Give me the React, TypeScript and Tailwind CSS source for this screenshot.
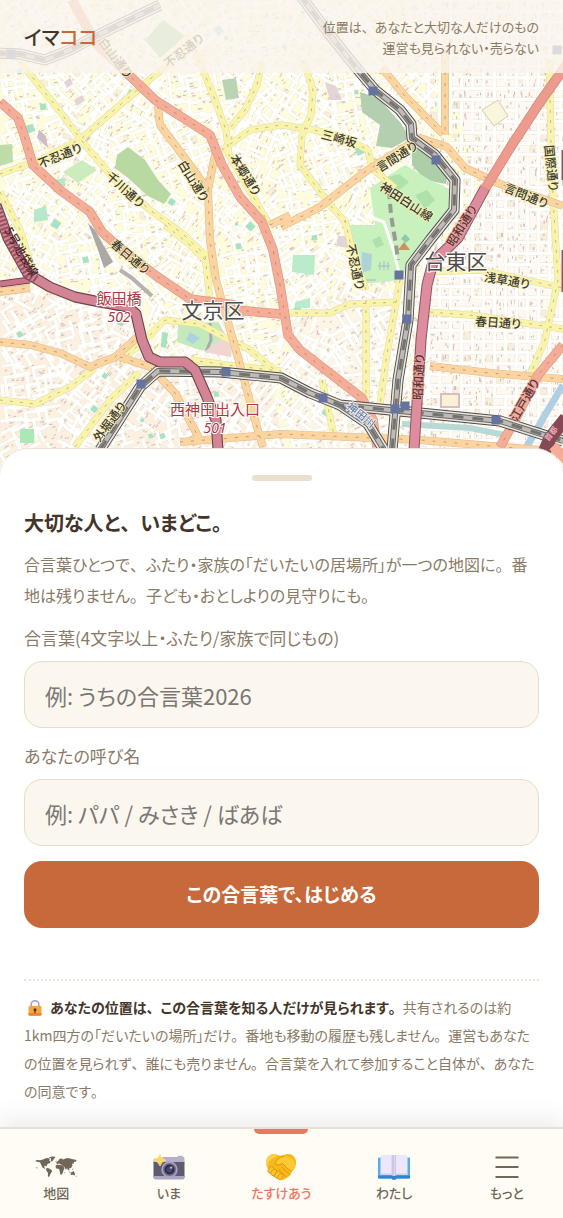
import type { ReactNode } from "react";

/* ---------- map ---------- */

function makeRandom(seed: number) {
  let s = seed;
  return () => {
    s = (s * 1664525 + 1013904223) % 4294967296;
    return s / 4294967296;
  };
}

type Texture = { streets: string; dots: string; pink: string; blocks: string; teal: string };

/** Minor streets and building marks, laid on loosely rotated local grids. */
function buildTexture(): Texture {
  const rnd = makeRandom(42);
  const out: Texture = { streets: "", dots: "", pink: "", blocks: "", teal: "" };
  const p = (n: number) => n.toFixed(1);
  for (let y = 0; y < 480; y += 11) {
    for (let x = 0; x < 570; x += 11) {
      const right = x > 425;
      const angle = right
        ? 0.06
        : -0.65 + 0.5 * Math.sin(Math.floor(x / 55) * 2.1 + Math.floor(y / 60) * 1.3);
      const c = Math.cos(angle);
      const s = Math.sin(angle);
      const jx = x + (right ? 0 : rnd() * 6);
      const jy = y + (right ? 0 : rnd() * 6);
      const l = 9 + rnd() * 10;
      if (rnd() < 0.8) out.streets += `M${p(jx)} ${p(jy)}l${p(c * l)} ${p(s * l)}`;
      if (rnd() < 0.75) out.streets += `M${p(jx)} ${p(jy)}l${p(-s * l)} ${p(c * l)}`;
      for (let k = 0; k < 3; k++) {
        const a = jx + rnd() * 10;
        const b = jy + rnd() * 10;
        const m = 1.5 + rnd() * 3;
        const seg = `M${p(a)} ${p(b)}l${p(right ? 0 : c * m)} ${p(right ? m : s * m)}`;
        if (rnd() < 0.6) out.dots += seg;
        else out.pink += seg;
      }
      const w = 3 + rnd() * 5;
      const block = `M${p(jx + 2)} ${p(jy + 2)}l${p(c * w)} ${p(s * w)}l${p(-s * w)} ${p(c * w)}l${p(-c * w)} ${p(-s * w)}z`;
      const pick = rnd();
      if (!right && pick < 0.03) out.teal += block;
      else if (pick > 0.9) out.blocks += block;
    }
  }
  return out;
}

const texture = buildTexture();

const yellowRoads = [
  "M20 62 55 105 85 145 115 180 150 210 183 234 205 255 210 300",
  "M0 174 40 160 82 138 120 105 155 75 190 48",
  "M195 50 215 100 226 130 229 155 262 212 270 225",
  "M262 62 257 85 245 110 230 128",
  "M222 150 250 130 281 125 310 129 345 138 368 150 372 168 395 188",
  "M303 60 313 90 311 115 302 135 300 165 330 205 345 222",
  "M345 220 352 250 366 290",
  "M0 192 20 230 34 275",
  "M0 400 35 404 70 387 95 368",
  "M120 362 150 335 165 320 200 324 230 340 250 350 300 390 335 400",
  "M190 360 235 366 281 371",
  "M285 313 330 313 350 304 400 302",
  "M366 300 366 400",
  "M400 280 386 360 379 412",
  "M430 272 480 270 563 288",
  "M430 312 480 316 563 329",
  "M549 60 552 180 558 280 545 340 528 380",
  "M75 447 110 400 140 372",
  "M322 380 335 440",
  "M165 225 190 245 207 262",
];

const orangeRoads = [
  "M158 106 160 125 190 165 208 190 210 240 216 280 226 315 240 365 255 420 263 447",
  "M208 190 216 150",
  "M382 68 405 96 443 134",
  "M445 50 445 135",
  "M281 227 320 207 365 172 400 150 420 138 447 147 465 168 500 184 563 206",
  "M0 342 30 345 60 353 90 367 115 357 140 335",
  "M120 357 150 367 175 393 200 440",
  "M430 366 490 373 563 379",
  "M180 442 281 434 420 440 563 452",
  "M0 292 30 288",
  "M270 225 290 215",
];

const salmonRoads = [
  "M0 102 18 118 24 135 33 165 60 190 90 212 102 232 120 248 155 275 190 299 235 305",
  "M235 310 281 314",
  "M72 0 95 42 130 76 155 100 210 135 222 165 240 197 262 222 273 250 280 285 288 335 300 350 362 398 373 420 377 447",
  "M563 345 538 375 515 420 500 447",
];

const rails = [
  "M300 -5 330 35 358 70 375 90 400 110 411 124 412 138 435 155 455 180 454 210 430 240 411 265 408 320 398 380 392 450",
  "M100 450 140 387 158 371 220 372 281 378 310 393 340 405 400 411 500 421 563 441",
  "M340 405 368 424 384 450",
  "M-5 53 20 54 45 60 70 50 100 34 160 5",
];

const stations = [
  [373, 91], [436, 160], [399, 275], [407, 319], [323, 398], [395, 409], [405, 406], [496, 420], [141, 384], [226, 372], [11, 54], [557, 50],
];

type Label = { x: number; y: number; r: number; t: string; dark?: boolean };

const roadLabels: Label[] = [
  { x: 60, y: 156, r: -22, t: "不忍通り" },
  { x: 125, y: 190, r: 42, t: "千川通り" },
  { x: 193, y: 181, r: 58, t: "白山通り" },
  { x: 245, y: 175, r: 58, t: "本郷通り" },
  { x: 339, y: 139, r: 15, t: "三崎坂" },
  { x: 397, y: 157, r: -32, t: "言間通り" },
  { x: 406, y: 202, r: 33, t: "神田白山線" },
  { x: 526, y: 196, r: 22, t: "言問通り" },
  { x: 551, y: 168, r: 84, t: "国際通り" },
  { x: 130, y: 257, r: 40, t: "春日通り" },
  { x: 355, y: 267, r: 78, t: "不忍通り" },
  { x: 507, y: 281, r: 10, t: "浅草通り" },
  { x: 498, y: 323, r: 4, t: "春日通り" },
  { x: 110, y: 422, r: -53, t: "外堀通り" },
  { x: 462, y: 226, r: -58, t: "昭和通り", dark: true },
  { x: 419, y: 377, r: -87, t: "昭和通り", dark: true },
  { x: 525, y: 400, r: -60, t: "江戸通り", dark: true },
  { x: 115, y: 58, r: 52, t: "白山通り" },
  { x: 184, y: 51, r: -38, t: "不忍通り" },
];

function CityMap() {
  return (
    <svg
      viewBox="0 0 563 480"
      preserveAspectRatio="xMidYMin slice"
      className="block h-[480px] w-full"
      style={{ fontFamily: '"Noto Sans CJK JP", sans-serif' }}
      role="img"
      aria-label="地図"
    >
      <rect width="563" height="480" fill="#fffbdc" />
      <path d="M0 285 135 310 160 365 270 375 290 480H0z" fill="#fcf0df" />
      <path d="M425 0H563V480H395L430 262 483 190z" fill="#fff9f1" />
      <path d="M285 300 400 290 390 450H300z" fill="#fdf6e6" />
      <path d={texture.blocks} fill="#f8efd8" stroke="#e8dfcf" strokeWidth=".6" />
      <path d={texture.dots} stroke="#c4bab0" strokeWidth="1" fill="none" />
      <path d={texture.pink} stroke="#dfbcc8" strokeWidth="1.4" fill="none" />
      <path d={texture.streets} stroke="#ebe2d2" strokeWidth="3.800" fill="none" />
      <path d={texture.streets} stroke="#fff" strokeWidth="3.200" fill="none" strokeLinecap="round" />
      <path d={texture.teal} fill="#9fe0bf" />

      <path d="M117 155 128 147 145 160 158 180 171 194 164 204 148 196 128 178 115 168z" fill="#b4d69c" />
      <path d="M0 145 12 144 13 162 0 166z" fill="#b9d9a3" />
      <path d="M63 172 82 160 97 170 78 183z" fill="#c9ebb9" />
      <path d="M145 40 163 20 185 36 160 58z" fill="#9fd09b" />
      <path d="M222 80 236 78 239 98 226 100z" fill="#b5d0b0" />
      <path d="M360 92 378 98 400 122 410 138 392 148 376 146 380 125 362 112z" fill="#aecbaa" />
      <path d="M412 146 428 155 448 172 446 184 425 180 412 165z" fill="#a5cba1" />
      <path d="M370 188 405 165 430 180 452 190 452 212 428 238 408 262 402 280 362 284 352 250 350 225 375 225z" fill="#c4f0ba" />
      <path d="M385 178l14-4 10 8-12 10zM415 195l12-5 8 10-10 9zM372 240l8-4 4 9-8 3z" fill="#a9dfa5" />
      <path d="M362 252 372 254 371 270 361 273z" fill="#a5d0d4" />
      <path d="M378 266h12M380 262v8M384 261v9M388 262v8M366 280h10" stroke="#9ab7c6" strokeWidth="1" />
      <path d="M293 255 315 255 314 275 292 272zM295 302 310 298 310 308 296 308z" fill="#b5ebc8" />
      <path d="M178 324 218 322 229 340 224 352 200 350 177 342z" fill="#bfe9b8" />
      <path d="M190 332 200 338 193 344 186 340z" fill="#a6cfe0" />
      <path d="M210 323 211 340 206 352" stroke="#a3a3a8" strokeWidth="3" fill="none" />
      <path d="M204 352 226 335 233 340 231 357z" fill="#efd3d0" />
      <path d="M162 332 168 333 166 348 161 347z" fill="#9fe0bf" />
      <path d="M20 429 34 429 34 443 20 443z" fill="#a4e6b4" />
      <path d="M34 210 46 206 48 220 34 222zM52 180 66 178 64 186 52 186z" fill="#b0e6c8" />
      <path d="M88 223 95 230 105 248 113 262 104 268 98 250z" fill="#a5a19d" />
      <path d="M120 270 132 278 152 296" stroke="#b0aca6" strokeWidth="4" fill="none" />
      <path d="M39 130 46 136 48 148 37 138z" fill="#c9b9c0" />
      <path d="M325 82 336 86 342 100 330 100zM338 236 348 236 348 248 336 246zM64 82l6-4 3 6-6 4zM74 100l8-5 3 5-8 6z" fill="#d9c7d2" opacity=".8" />
      <path d="M402 424 470 428 510 436" stroke="#b3d6d3" strokeWidth="6" fill="none" />
      <path d="M441 394h18v13h-18z" fill="#fbf0d6" stroke="#dcb6bb" strokeWidth="2" />
      <path d="M482 110 498 100 508 116 494 126z" fill="#f9f6da" stroke="#cdc9b4" />
      <path d="M563 385 545 415 525 450" stroke="#a9cbe4" strokeWidth="7" fill="none" />
      <path d="M365 215 384 222 394 252 399 273" stroke="#fff" strokeWidth="3" fill="none" />
      <path d="M389 190 391 215 396 245 398 260" stroke="#8d948b" strokeWidth="4" strokeDasharray="9 5" fill="none" />
      <path d="m398 250 6-8 6 8z" fill="#c58a55" />
      <path d="m401 239 4-5 5 5-4 4z" fill="#83c6a2" />

      <g fill="none" strokeLinejoin="round">
        {yellowRoads.map((d) => (
          <path key={d} d={d} stroke="#dcd8a4" strokeWidth="7" />
        ))}
        {yellowRoads.map((d) => (
          <path key={d} d={d} stroke="#f9f3a4" strokeWidth="6.200" />
        ))}
        {yellowRoads.map((d) => (
          <path key={d} d={d} stroke="#bdb583" strokeWidth="1" strokeDasharray="3 7" />
        ))}
        {orangeRoads.map((d) => (
          <path key={d} d={d} stroke="#dfb988" strokeWidth="8" />
        ))}
        {orangeRoads.map((d) => (
          <path key={d} d={d} stroke="#fbd19a" strokeWidth="6.800" />
        ))}
        {orangeRoads.map((d) => (
          <path key={d} d={d} stroke="#c0966a" strokeWidth="1" strokeDasharray="3 8" />
        ))}
        {salmonRoads.map((d) => (
          <path key={d} d={d} stroke="#dd8f7d" strokeWidth="9.500" />
        ))}
        {salmonRoads.map((d) => (
          <path key={d} d={d} stroke="#f4a790" strokeWidth="8.200" />
        ))}
        {salmonRoads.map((d) => (
          <path key={d} d={d} stroke="#c47d6c" strokeWidth="1" strokeDasharray="3 8" />
        ))}
        <path d="M570 60 540 102 510 148 483 192" stroke="#d27a70" strokeWidth="10" />
        <path d="M570 60 540 102 510 148 483 192" stroke="#ec9387" strokeWidth="8.600" />

        {rails.map((d) => (
          <path key={d} d={d} stroke="#3d3b39" strokeWidth="11" />
        ))}
        {rails.map((d) => (
          <path key={d} d={d} stroke="#e9e6e2" strokeWidth="9.200" />
        ))}
        {rails.map((d) => (
          <path key={d} d={d} stroke="#5e5b58" strokeWidth="6" />
        ))}
        {rails.map((d) => (
          <path key={d} d={d} stroke="#b9b5b0" strokeWidth="4" />
        ))}
        {rails.map((d) => (
          <path key={d} d={d} stroke="#6a6764" strokeWidth="3" strokeDasharray="11 9" />
        ))}

        <path d="M485 188 458 238 433 262 427 285 421 340 414 450" stroke="#7d4a56" strokeWidth="11" />
        <path d="M485 188 458 238 433 262 427 285 421 340 414 450" stroke="#db8497" strokeWidth="9" />
        <path d="M0 284 15 282 30 280" stroke="#6f3442" strokeWidth="7" />
        <path d="M0 284 15 282 30 280" stroke="#c76a7f" strokeWidth="5" />
        <path d="M-4 205 8 238 28 274 50 287 75 297 100 302 128 307 136 314 142 340 149 357 160 362 185 362 195 370 206 395 216 420 218 450" stroke="#5f343f" strokeWidth="11" />
        <path d="M-4 205 8 238 28 274 50 287 75 297 100 302 128 307 136 314 142 340 149 357 160 362 185 362 195 370 206 395 216 420 218 450" stroke="#d07b8f" strokeWidth="8.800" />
        <path d="M-4 205 8 238 28 274 36 280" stroke="#8d4554" strokeWidth="9" strokeDasharray="2 2" />
        <path d="M566 418 550 438 537 470" stroke="#7d3a49" strokeWidth="13" />
        <path d="M563 150V180M563 250V292" stroke="#8d4554" strokeWidth="3" />
        <path d="M553 446 572 466" stroke="#f4a790" strokeWidth="10" />
      </g>

      {stations.map(([x, y]) => (
        <rect key={`${x}-${y}`} x={x - 4.5} y={y - 4.5} width="9" height="9" fill="#5a669a" />
      ))}

      <g textAnchor="middle" fontSize="12" fontWeight="500">
        {roadLabels.map((l) => (
          <text
            key={`${l.x}-${l.y}`}
            transform={`translate(${l.x} ${l.y}) rotate(${l.r})`}
            dy="4"
            fill={l.dark ? "#4d2222" : "#2c2a1e"}
            stroke={l.dark ? "#e9a09a" : "#fbf3b4"}
            strokeWidth="1.500"
            paintOrder="stroke"
          >
            {l.t}
          </text>
        ))}
        <text transform="translate(21 252) rotate(60)" dy="4" fill="#3b121d" fontSize="12">
          5号池袋線
        </text>
        <text transform="translate(550 433) rotate(-52)" dy="4" fill="#f0b6bf" fontSize="8">
          首都
        </text>
        <text transform="translate(361 415) rotate(38)" dy="4" fill="#5f74a3" stroke="#fff" strokeWidth="1.500" paintOrder="stroke" fontSize="11">
          神田川
        </text>
      </g>
      <g textAnchor="middle" stroke="#fff" strokeWidth="2" paintOrder="stroke">
        <g fill="#a82836" fontSize="15">
          <text x="119" y="304">飯田橋</text>
          <text x="215" y="415">西神田出入口</text>
          <g fontFamily='"Noto Sans", sans-serif' fontStyle="italic" fontSize="14">
            <text x="119" y="322">502</text>
            <text x="215" y="433">501</text>
          </g>
        </g>
        <g fill="#3f3d3b" fontSize="21">
          <text x="213" y="318">文京区</text>
          <text x="456" y="269">台東区</text>
        </g>
      </g>
      <rect width="563" height="480" fill="#fffdf5" opacity=".08" />
    </svg>
  );
}

/* ---------- icons ---------- */

function WorldMapIcon() {
  return (
    <svg viewBox="0 0 42 22" className="h-[22px] w-[42px]" fill="#706758" aria-hidden="true">
      <path d="M0 5 2 4 5 4.300 8 3.500 10 2.500 12.500 2 15 2.800 14 4.500 15.500 5 15 7 12.500 8 11.500 10.500 10 9.500 9 11 10.500 12.300 9.500 12.700 7.500 11.500 6 8.500 5 6.300 3 6z" />
      <path d="M13.500 1.500 17 .5 20.500.800 19 3 17 5.500 15.800 5 16 2.500z" />
      <path d="M11 12.500 13 12 16 13.500 17.300 15 16 17 15 19 14 21 12.800 20.500 13 17 11.300 14.500z" />
      <path d="M20.500 10 22 8.500 25 9 28 9.500 29.500 12 28.500 14.500 27.500 17.500 26 19 25 17.500 24.500 14 23.500 12.800 21 12.500z" />
      <path d="M21.500 7.500 21.300 6 23 5.300 24 3.500 26 2.200 28 3.500 32 2 35 2.500 38 3.200 41.500 4 41 5.500 39 6 38.500 8 37 7.500 37.500 9.500 36 12 34 12.500 34.500 14.500 33 14 32 12 31 14 29.500 11 27.500 9.500 25.500 8.300 24 7.500 22.500 8z" />
      <path d="M36 16.500 38.500 15 40 17.500 39.500 19.500 37.500 18.800 35.500 19zM33.500 15.500 36 16 35 16.800zM29.500 16.500 30.300 15.800 30 18zM40.800 20.500 41.800 19.500 41.200 21.300zM1 11.500h1.500v.8H1zM37 13 38.500 12.500 38 14zM20.300 5.500 21.500 4.500 21.300 6z" />
    </svg>
  );
}

function CameraIcon() {
  return (
    <svg viewBox="0 0 32 26" className="h-[26px] w-8" aria-hidden="true">
      <path d="M9 4.500Q9 3 10.500 3H24l1.500-1.200h3.500L30.500 3Q31.500 3 31.500 5v4H.5V6Q.5 4.500 2 4.500z" fill="#b7b0cc" />
      <path d="M.5 8h31v15q0 2-2 2h-27q-2 0-2-2z" fill="#5f5a70" />
      <path d="M.5 22h31v1.500q0 2-2 2h-27q-2 0-2-2z" fill="#aca5c4" />
      <circle cx="16.500" cy="15.500" r="8.200" fill="#a9a3bf" />
      <circle cx="16.500" cy="15.500" r="6.600" fill="#75708a" />
      <circle cx="16.500" cy="15.500" r="5" fill="#2e2a41" />
      <circle cx="16.500" cy="15.500" r="3" fill="#46466e" />
      <circle cx="18.200" cy="13.600" r="1.200" fill="#b9bfe0" />
      <path d="M7 0q.8 4.800 5.800 6.200Q8.300 7.500 7 12 5.500 7.500.8 6.200 5.800 4.500 7 0z" fill="#fbd75b" stroke="#f7e59b" strokeWidth=".8" />
    </svg>
  );
}

function HandshakeIcon() {
  return (
    <svg viewBox="0 0 32 28" className="h-7 w-8" aria-hidden="true">
      <path d="M1 9Q1.500 3.500 6 1.500q3-1.200 6.500.5Q15.500 3 18.500 2q5.500-2.200 9 .3 4 3 3.500 8-.3 5-4 8.200-1.500 5-7 7.500-4 2-7 0Q5 23 3 16 1 12.500 1 9z" fill="#f8b918" />
      <path d="M1 9Q1.500 3.500 6 1.500q3-1.200 6.500.5Q11 4 7.500 5.500 3.500 7.500 2.500 14 1 12 1 9z" fill="#ffd145" />
      <path d="M12 7q3-4 8-3.800 5 .3 7.500 3 2 3.300 3 5.500-.5 4-3.500 6.800-6-3.500-9.500-8Q13.500 13 11 11.500 9.500 9.500 12 7z" fill="#ffca33" />
      <path d="M17.500 10.500Q14 13 11.300 11.600 9.400 9.500 12 7q3-3.600 7-3.700" fill="none" stroke="#d98a0a" strokeWidth=".9" />
      <path d="M17.500 10.500q4 5 9 8M17 14q3.500 4.500 7.500 7M14 16.500q3.500 4 6.500 7" fill="none" stroke="#dd930e" strokeWidth=".9" strokeLinecap="round" />
      <g fill="#ffc52b" stroke="#d98a0a" strokeWidth=".7">
        <rect x="3.500" y="13.500" width="4.600" height="7" rx="2.300" transform="rotate(35 6 17)" />
        <rect x="6.700" y="16" width="4.600" height="7" rx="2.300" transform="rotate(35 9 19)" />
        <rect x="10" y="18" width="4.600" height="7" rx="2.300" transform="rotate(35 12 22)" />
        <rect x="13.500" y="20.500" width="4.300" height="6" rx="2.100" transform="rotate(35 15 23)" />
      </g>
    </svg>
  );
}

function BookIcon() {
  return (
    <svg viewBox="0 0 32 26" className="h-[26px] w-8" aria-hidden="true">
      <path d="M0 4.500Q0 3.500 1 3.500h30q1 0 1 1v19q0 1-1 1H18.500q-.5 1.200-2.500 1.200t-2.500-1.200H1q-1 0-1-1z" fill="#58aeea" />
      <path d="M0 21.500h32v2q0 1-1 1H18.500q-.5 1.200-2.500 1.200t-2.500-1.200H1q-1 0-1-1z" fill="#2f85cf" />
      <path d="M2.500 3Q2.500 1 4.500 1H14q2 0 2 1.500V22q-1-1-3-1H2.500z" fill="#ece7fb" />
      <path d="M29.500 3q0-2-2-2H18q-2 0-2 1.500V22q1-1 3-1h10.500z" fill="#ece7fb" />
      <path d="M13.500 1H16v21q-.8-1-2.500-1zM18 1h-1.500v20.500l1.500-.5z" fill="#cfc6e6" />
      <path d="M2.500 19.500H14l2 1.500 2-1.500h11.500V21H19q-2 0-3 1-1-1-3-1H2.500z" fill="#d5cdee" />
    </svg>
  );
}

function MenuIcon() {
  return (
    <svg viewBox="0 0 24 24" className="size-6" stroke="#706758" strokeWidth="2" aria-hidden="true">
      <path d="M.5 2.500h23M.5 12h23M.5 22h23" />
    </svg>
  );
}

function LockIcon() {
  return (
    <svg viewBox="0 0 14 16" className="mr-2 ml-1 inline-block h-4 w-[14px] align-[-3px]" aria-hidden="true">
      <path d="M3.200 8V4.500a3.800 3.800 0 0 1 7.600 0V8" fill="none" stroke="#aaa3b8" strokeWidth="1.700" />
      <rect x=".5" y="6" width="13" height="9.700" rx="1.400" fill="#f7a63e" />
      <path d="M.5 13h13v1.300q0 1.400-1.400 1.400H1.900Q.5 15.700.5 14.300z" fill="#f08436" />
      <circle cx="7" cy="9.700" r="1.500" fill="#4d3430" />
      <path d="M6.400 10h1.200v3.300H6.400z" fill="#4d3430" />
    </svg>
  );
}

/* ---------- page ---------- */

/** Proportional kana, with the comma and full stop keeping their full width. */
function Ja({ children }: { children: string }) {
  return (
    <>
      {children.split(/([、。])/).map((part, i) =>
        part === "、" || part === "。" ? (
          <span key={i} className="[font-feature-settings:normal]">
            {part}
          </span>
        ) : (
          part
        ),
      )}
    </>
  );
}

function TextField({ id, label, placeholder }: { id: string; label: string; placeholder: string }) {
  return (
    <div>
      <label htmlFor={id} className="block text-[17px] leading-6 text-[#8a7a66]">
        {label}
      </label>
      <input
        id={id}
        type="text"
        placeholder={placeholder}
        className="mt-[11px] block h-[67px] w-full rounded-[18px] border border-[#e8dccb] bg-[#fbf6ee] px-5 text-[22px] text-[#43352a] outline-none placeholder:text-[#7a7774]"
      />
    </div>
  );
}

function NavItem({ label, active, children }: { label: string; active?: boolean; children: ReactNode }) {
  return (
    <a
      href="#"
      aria-current={active ? "page" : undefined}
      className={
        active
          ? "relative flex flex-1 flex-col items-center pt-6 text-[#ee7560]"
          : "relative flex flex-1 flex-col items-center pt-6 text-[#706758]"
      }
    >
      {active && <span className="absolute top-0 h-[5px] w-[54px] rounded-b-[5px] bg-[#ee7560]" />}
      <span className="flex h-7 items-center justify-center">{children}</span>
      <span className="text-[13px] leading-6 font-medium">{label}</span>
    </a>
  );
}

export default function App() {
  return (
    <div
      className="relative flex min-h-screen flex-col bg-white [font-feature-settings:'palt']"
      style={{ fontFamily: '"Noto Sans CJK JP", sans-serif' }}
    >
      <div className="relative h-[448px] shrink-0">
        <div className="absolute inset-x-0 top-0">
          <CityMap />
        </div>
        <header className="relative flex h-[73px] items-center justify-between bg-[#faf4ec]/80 px-6">
          <h1 className="text-[20px] leading-8 font-medium text-[#43352a]">
            イマ<span className="text-[#c7693b]">ココ</span>
          </h1>
          <p className="text-right text-[13px] leading-[21px] text-[#8a7a66]">
            <Ja>位置は、あなたと大切な人だけのもの</Ja>
            <br />
            運営も見られない・売らない
          </p>
        </header>
      </div>

      <main className="relative flex-1 rounded-t-[28px] border-t border-[#ebe3d8] bg-white px-6 pt-[26px]">
        <div className="mx-auto h-[6px] w-[60px] rounded-full bg-[#ebdfcf]" />
        <h2 className="mt-[26px] text-[20px] leading-8 font-bold text-[#43352a]">
          <Ja>大切な人と、いまどこ。</Ja>
        </h2>
        <p className="mt-[10px] text-[16px] leading-[31px] text-[#8a7a66]">
          <Ja>合言葉ひとつで、ふたり・家族の「だいたいの居場所」が一つの地図に。番</Ja>
          <br />
          <Ja>地は残りません。子ども・おとしよりの見守りにも。</Ja>
        </p>
        <form className="mt-[15px]" onSubmit={(e) => e.preventDefault()}>
          <div className="flex flex-col gap-4">
            <TextField id="phrase" label="合言葉(4文字以上・ふたり/家族で同じもの)" placeholder="例: うちの合言葉2026" />
            <TextField id="name" label="あなたの呼び名" placeholder="例: パパ / みさき / ばあば" />
          </div>
          <button
            type="submit"
            className="mt-[15px] h-[67px] w-full rounded-[18px] bg-[#c7693b] text-[19px] font-bold text-white"
          >
            この合言葉で、はじめる
          </button>
        </form>
        <p className="mt-[51px] border-t-2 border-dotted border-[#ebe3d8] pt-3 pb-3 text-[14px] leading-[28px] text-[#8a7a66]">
          <LockIcon />
          <strong className="font-bold text-[#43352a]">
            <Ja>あなたの位置は、この合言葉を知る人だけが見られます。</Ja>
          </strong>
          共有されるのは約
          <br />
          <Ja>1km四方の「だいたいの場所」だけ。番地も移動の履歴も残しません。運営もあなた</Ja>
          <br />
          <Ja>の位置を見られず、誰にも売りません。合言葉を入れて参加すること自体が、あなた</Ja>
          <br />
          <Ja>の同意です。</Ja>
        </p>
      </main>

      <nav className="sticky bottom-0 flex h-[91px] shrink-0 border-t-2 border-[#e9e0d4] bg-[#fffcf6] shadow-[0_-6px_24px_rgba(67,53,42,0.10)]">
        <NavItem label="地図">
          <WorldMapIcon />
        </NavItem>
        <NavItem label="いま">
          <CameraIcon />
        </NavItem>
        <NavItem label="たすけあう" active>
          <HandshakeIcon />
        </NavItem>
        <NavItem label="わたし">
          <BookIcon />
        </NavItem>
        <NavItem label="もっと">
          <MenuIcon />
        </NavItem>
      </nav>
    </div>
  );
}
